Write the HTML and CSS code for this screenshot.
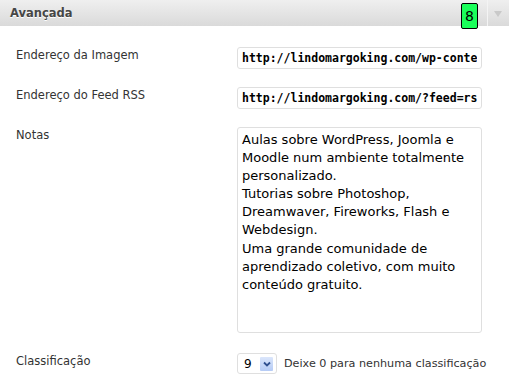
FILE: index.html
```html
<!DOCTYPE html>
<html lang="pt-BR">
<head>
    <meta charset="UTF-8">
    <title>Avançada</title>
    <link rel="stylesheet" href="styles.css">
</head>
<body>
    <div class="postbox">
        <div class="handle">
            <h3>Avançada</h3>
            <span class="count">8</span>
            <span class="toggle"></span>
        </div>

        <div class="inside">
            <label class="field-label" for="link-image">Endereço da Imagem</label>
            <input class="code" type="text" id="link-image" value="http://lindomargoking.com/wp-content/uploads/logo.png">

            <label class="field-label" for="link-rss">Endereço do Feed RSS</label>
            <input class="code" type="text" id="link-rss" value="http://lindomargoking.com/?feed=rss2">

            <label class="field-label" for="link-notes">Notas</label>
            <textarea id="link-notes">Aulas sobre WordPress, Joomla e Moodle num ambiente totalmente personalizado.
Tutorias sobre Photoshop, Dreamwaver, Fireworks, Flash e Webdesign.
Uma grande comunidade de aprendizado coletivo, com muito conteúdo gratuito.</textarea>

            <label class="field-label rating-label" for="link-rating">Classificação</label>
            <div class="rating">
                <div class="select">
                    <span class="select-value">9</span>
                    <span class="select-btn">
                        <svg width="8" height="6" viewBox="0 0 8 6"><path d="M1 1.5 L4 4.5 L7 1.5" fill="none" stroke="#2f4f8f" stroke-width="1.8"/></svg>
                    </span>
                </div>
                <span class="hint">Deixe 0 para nenhuma classificação</span>
            </div>
        </div>
    </div>
</body>
</html>
```

FILE: styles.css
```css
body {
    margin: 0;
    background: #fff;
    font-family: 'DejaVu Sans', Verdana, sans-serif;
    color: #333;
}
.postbox {
    width: 509px;
}
.handle {
    position: relative;
    height: 26px;
    background: linear-gradient(to bottom, #efefef, #dadada);
}
.handle h3 {
    margin: 0;
    padding: 6px 0 0 10px;
    font-size: 11.5px;
    line-height: 14px;
    font-weight: bold;
    color: #464646;
    text-shadow: 0 1px 0 #fff;
}
.count {
    position: absolute;
    left: 461px;
    top: 3px;
    width: 15px;
    height: 24px;
    background: #1aff5a;
    border: 1px solid #000;
    border-radius: 2px;
    font-size: 14px;
    line-height: 24px;
    text-align: center;
    color: #000;
}
.toggle {
    position: absolute;
    left: 487px;
    top: 0;
    width: 22px;
    height: 26px;
    border-left: 1px solid #f4f4f4;
}
.toggle::after {
    content: "";
    position: absolute;
    left: 6px;
    top: 11px;
    border-left: 4px solid transparent;
    border-right: 4px solid transparent;
    border-top: 6px solid #c9c9c9;
}
.inside {
    display: grid;
    grid-template-columns: 221px 245px;
    row-gap: 18px;
    padding: 21px 0 0 16px;
}
.field-label {
    font-size: 11.5px;
    line-height: 13px;
    padding-top: 2px;
    color: #333;
}
input.code {
    box-sizing: border-box;
    width: 245px;
    height: 22px;
    margin: 0;
    padding: 0 4px;
    border: 1px solid #dfdfdf;
    border-radius: 3px;
    font-family: 'DejaVu Sans Mono', monospace;
    font-weight: bold;
    font-size: 11.5px;
    color: #000;
    background: #fff;
}
textarea {
    box-sizing: border-box;
    width: 245px;
    height: 206px;
    margin: 0;
    padding: 3px 4px;
    border: 1px solid #dfdfdf;
    border-radius: 3px;
    font-family: 'DejaVu Sans', Verdana, sans-serif;
    font-size: 13px;
    line-height: 18.1px;
    color: #000;
    resize: none;
    overflow: hidden;
}
.rating-label,
.rating {
    margin-top: 2px;
}
.rating {
    display: flex;
    align-items: center;
    gap: 7px;
    white-space: nowrap;
}
.select {
    box-sizing: border-box;
    flex-shrink: 0;
    display: flex;
    align-items: center;
    width: 40px;
    height: 21px;
    padding: 0 3px 0 6px;
    border: 1px solid #dfdfdf;
    border-radius: 3px;
    font-size: 12px;
    color: #000;
}
.select-value {
    flex: 1;
}
.select-btn {
    display: flex;
    align-items: center;
    justify-content: center;
    width: 13px;
    height: 14px;
    background: linear-gradient(to bottom, #dbe6fb, #b5cbf5);
    border-radius: 1px;
}
.hint {
    font-size: 11.2px;
    color: #333;
}
```
